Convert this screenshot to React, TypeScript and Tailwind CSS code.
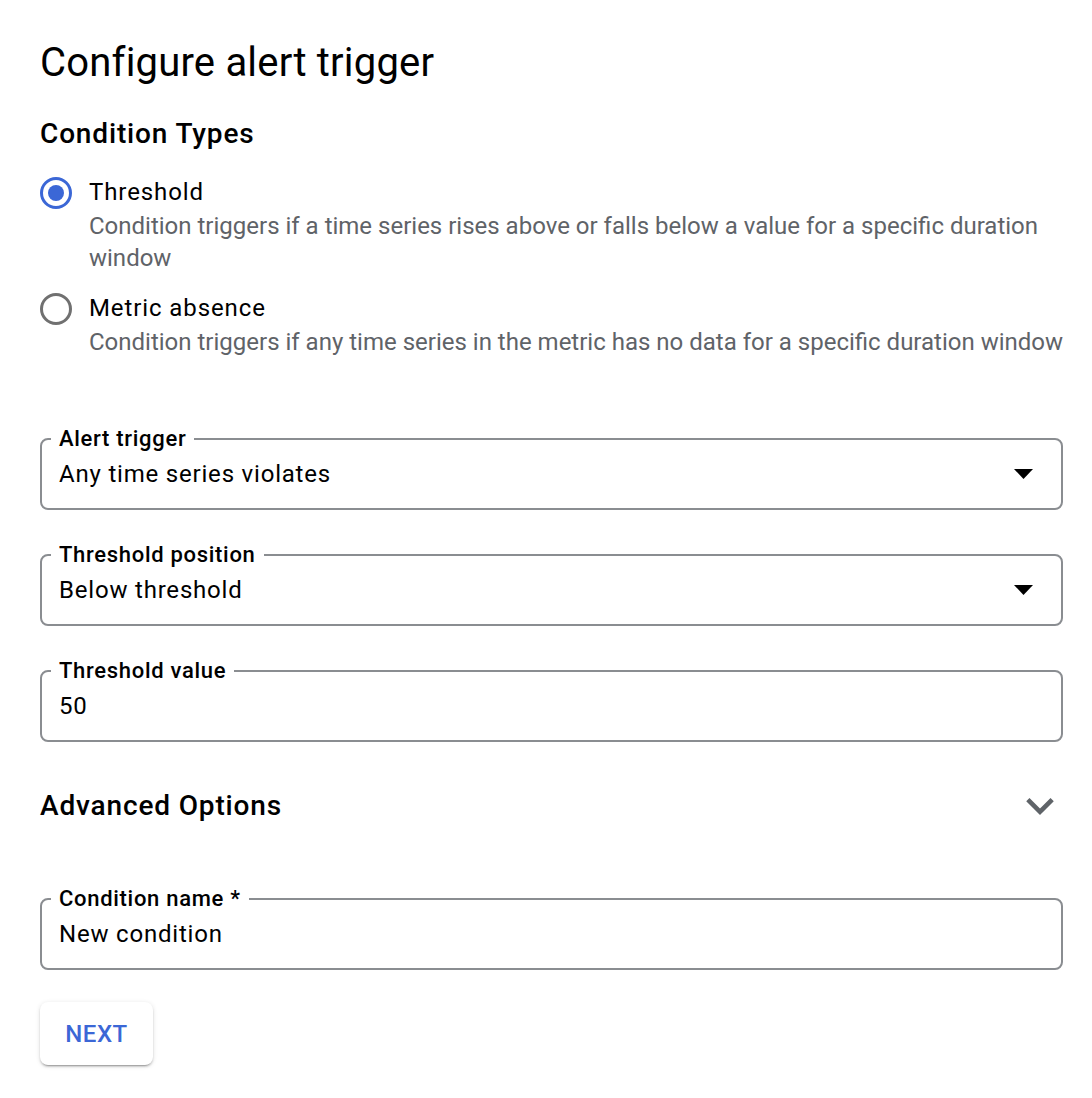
import React, { useState } from "react";

type ConditionType = "threshold" | "absence";

const conditionTypes: { id: ConditionType; label: string; description: string }[] = [
  {
    id: "threshold",
    label: "Threshold",
    description:
      "Condition triggers if a time series rises above or falls below a value for a specific duration window",
  },
  {
    id: "absence",
    label: "Metric absence",
    description:
      "Condition triggers if any time series in the metric has no data for a specific duration window",
  },
];

const DropdownArrow = () => (
  <svg width="19" height="10" viewBox="0 0 19 10" className="shrink-0">
    <path d="M0 0h19L9.5 10z" fill="#000" />
  </svg>
);

const ChevronDown = () => (
  <svg width="28" height="17" viewBox="6 8.59 12 7.41">
    <path d="M16.59 8.59L12 13.17 7.41 8.59 6 10l6 6 6-6z" fill="#5f6368" />
  </svg>
);

// Outlined field with the label sitting in a notch of the top border
const OutlinedField: React.FC<{ label: string; value: string; select?: boolean; className?: string }> = ({
  label,
  value,
  select,
  className = "",
}) => (
  <fieldset className={`border-2 border-[#8a8d91] rounded-lg px-[9px] pt-[7px] pb-[18px] ${className}`}>
    <legend className="px-2 text-[22px] leading-[24px] font-medium tracking-[0.7px] text-black">{label}</legend>
    <div className="flex items-center justify-between pl-2 pr-[19px]">
      <span className="text-[24px] leading-[32px] tracking-[0.8px] text-black">{value}</span>
      {select && <DropdownArrow />}
    </div>
  </fieldset>
);

const Radio: React.FC<{ checked: boolean }> = ({ checked }) => (
  <span
    className={`flex h-[32px] w-[32px] shrink-0 items-center justify-center rounded-full border-[3px] ${
      checked ? "border-[#3b67d6]" : "border-[#707070]"
    }`}
  >
    {checked && <span className="h-[16px] w-[16px] rounded-full bg-[#3b67d6]" />}
  </span>
);

export default function App() {
  const [selected, setSelected] = useState<ConditionType>("threshold");

  return (
    <div className="min-h-screen bg-white font-[Roboto,sans-serif] text-black">
      <div className="flex w-[1063px] flex-col pl-[40px] pt-[39px] pb-[33px]">
        <h1 className="text-[40px] leading-[48px] font-normal tracking-[0.2px]">Configure alert trigger</h1>

        <h2 className="mt-[29px] text-[28px] leading-[36px] font-medium tracking-[0.85px]">Condition Types</h2>

        <div className="mt-[25px] flex flex-col gap-[19px]">
          {conditionTypes.map((type) => (
            <label key={type.id} className="flex cursor-pointer items-start gap-[17px]" onClick={() => setSelected(type.id)}>
              <Radio checked={selected === type.id} />
              <div className="-mr-[30px] flex flex-col -mt-px">
                <span className="text-[24px] leading-[32px] tracking-[0.9px]">{type.label}</span>
                <span className="mt-[2px] text-[24px] leading-[32px] text-[#5f6368]">{type.description}</span>
              </div>
            </label>
          ))}
        </div>

        <OutlinedField className="mt-[69px]" label="Alert trigger" value="Any time series violates" select />
        <OutlinedField className="mt-[33px]" label="Threshold position" value="Below threshold" select />
        <OutlinedField className="mt-[33px]" label="Threshold value" value="50" />

        <div className="mt-[46px] flex items-center justify-between pr-[9px]">
          <h2 className="text-[28px] leading-[36px] font-medium tracking-[0.85px]">Advanced Options</h2>
          <ChevronDown />
        </div>

        <OutlinedField className="mt-[63px]" label="Condition name *" value="New condition" />

        <div className="mt-[32px]">
          <button className="h-[63px] w-[113px] rounded-lg bg-white text-[24px] font-medium tracking-[0.5px] text-[#3b67d6] shadow-[0_3px_1px_-2px_rgba(0,0,0,0.2),0_2px_2px_0_rgba(0,0,0,0.14),0_1px_5px_0_rgba(0,0,0,0.12)]">
            NEXT
          </button>
        </div>
      </div>
    </div>
  );
}
